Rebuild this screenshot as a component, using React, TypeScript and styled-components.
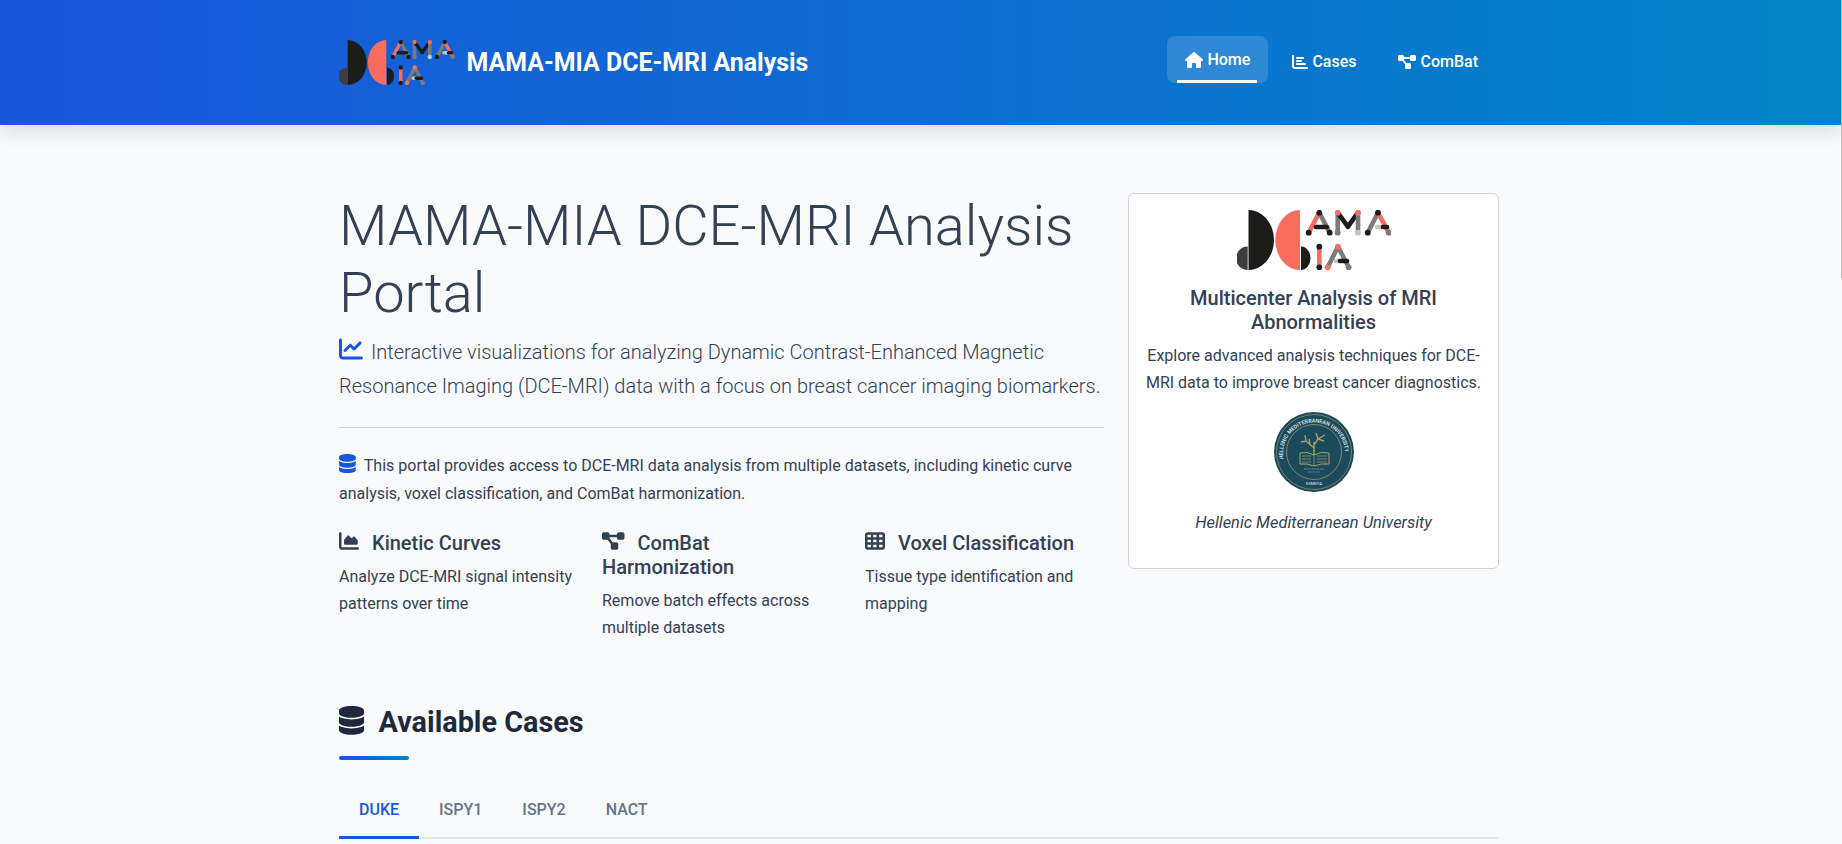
import React from "react";
import styled, { createGlobalStyle } from "styled-components";
import { FaHouse, FaChartBar, FaDiagramProject, FaChartLine, FaDatabase, FaChartArea, FaTableCells } from "react-icons/fa6";

const Global = createGlobalStyle`
  html, body { margin: 0; padding: 0; height: 844px; overflow: hidden; }
  body { font-family: Roboto, "Liberation Sans", sans-serif; font-size: 16px; line-height: 1.7; color: #334155; background: #f8fafc; }
  * { box-sizing: border-box; }
`;
const HouseIcon = styled(FaHouse)`
  && { width: 1.125em; height: 1em; }
`;
const DiagramIcon = styled(FaDiagramProject)`
  && { width: 1.125em; height: 1em; }
`;
const DbIcon = styled(FaDatabase)`
  && { width: .875em; height: 1em; }
`;
const Header = styled.header`
  height: 125px; background: linear-gradient(90deg, #1a56db, #0284c7);
  box-shadow: 0 4px 20px rgba(0,0,0,.15); position: relative; color: #fff;
`;
const Wrap = styled.div`
  width: 1160px; margin-left: 339px;
`;
const HeaderRow = styled(Wrap)`
  display: flex; align-items: center; justify-content: space-between; height: 100%;
`;
const Brand = styled.div`
  display: flex; align-items: center; gap: 12px; font-size: 24.9px; font-weight: 700; line-height: 1.2;
`;
const Nav = styled.nav`
  display: flex; gap: 6px; margin-right: 3px; margin-bottom: 2px;
`;
const NavItem = styled.a<{ $active?: boolean }>`
  position: relative; display: flex; align-items: center; gap: 4px; height: 47px; padding: 0 18px;
  font-size: 16px; font-weight: 500; color: #fff; border-radius: 8px;
  background: ${p => (p.$active ? "rgba(255,255,255,.15)" : "transparent")};
  svg { width: 1em; height: 1em; flex: none; }
  ${p => p.$active && `transform: translateY(-2px); &::after { content: ""; position: absolute; left: 10px; right: 11px; bottom: 0; height: 3px; background: #fff; }`}
`;
const Main = styled(Wrap)`
  padding-top: 68px;
`;
const Hero = styled.div`
  display: grid; grid-template-columns: 765px 371px; column-gap: 24px; align-items: start;
`;
const Title = styled.h1`
  margin: 0 0 8px; font-size: 56px; font-weight: 300; line-height: 1.2; color: #334155;
`;
const Lead = styled.p`
  margin: 0; font-size: 20px; font-weight: 300; line-height: 34px; color: #334155;
  svg { color: #1a56db; vertical-align: -2px; margin-right: 8px; width: 24px; height: 24px; }
`;
const Rule = styled.hr`
  margin: 24px 0; border: 0; border-top: 1px solid #cfd2d6;
`;
const Intro = styled.p`
  margin: 0 0 24px; color: #334155;
  svg { color: #1a56db; margin-right: 8px; font-size: 19.2px; vertical-align: -2px; }
`;
const Features = styled.div`
  display: grid; grid-template-columns: repeat(3, 263px); margin-right: -24px;
`;
const Feature = styled.div`
  padding-right: 24px;
`;
const FeatureTitle = styled.h3`
  margin: 0 0 8px; font-size: 20px; font-weight: 500; line-height: 1.2; color: #334155;
  svg { margin-right: 13px; font-size: 20px; width: 1em; height: 1em; vertical-align: -1px; }
`;
const FeatureText = styled.p`
  margin: 0; color: #334155;
`;
const Card = styled.aside`
  height: 376px; background: #fff; border: 1px solid #cfd2d6; border-radius: 6px; padding: 16px; text-align: center;
  display: flex; flex-direction: column; align-items: center;
`;
const CardTitle = styled.h4`
  margin: 16px 0 8px; font-size: 20px; font-weight: 500; line-height: 1.2; color: #334155;
`;
const CardText = styled.p`
  margin: 0 0 16px; color: #334155;
`;
const Uni = styled.p`
  margin: 17px 0 0; font-style: italic; font-size: 16.4px; color: #334155;
`;
const SectionTitle = styled.h2`
  margin: 64px 0 0; font-size: 28.8px; font-weight: 700; line-height: 1.2; color: #1e293b;
  svg { margin-right: 14.4px; font-size: 28.8px; vertical-align: -3px; }
`;
const Bar = styled.div`
  width: 70px; height: 4px; border-radius: 2px; margin-top: 16px; background: linear-gradient(90deg, #1a56db, #0284c7);
`;
const Tabs = styled.div`
  display: flex; margin-top: 20px; border-bottom: 2px solid #e2e8f0;
`;
const Tab = styled.div<{ $active?: boolean }>`
  padding: 16px 20px 13px; margin-bottom: -2px; font-size: 16px; font-weight: 500; line-height: 1.7;
  color: ${p => (p.$active ? "#1a56db" : "#64748b")};
  border-bottom: 3px solid ${p => (p.$active ? "#1a56db" : "transparent")};
`;
const ScrollThumb = styled.div`
  position: fixed; top: 0; right: 0; width: 1px; height: 278px; background: #bdbdbd;
`;
const Pic = styled.svg`
  display: block; flex: none;
`;

const Mark: React.FC<{ height: number }> = ({ height }) => {
  const dark = "#1c1c1a", red = "#f96c5e", grey = "#7a7a7a", light = "#c4c4c4";
  const seg = (x1: number, y1: number, x2: number, y2: number, c: string) => (
    <line x1={x1} y1={y1} x2={x2} y2={y2} stroke={c} strokeWidth="4.6" strokeLinecap="round" />
  );
  const dot = (x: number, y: number, c: string) => <circle cx={x} cy={y} r="2.9" fill={c} />;
  return (
    <Pic height={height} width={(height * 154) / 60} viewBox="0 0 154 60" aria-hidden>
      <path d="M10.7 36.6a11.7 11.7 0 0 0 0 23.4z" fill="#3d3d3b" />
      <path d="M11.5 0a25.5 30 0 0 1 0 60z" fill={dark} />
      <path d="M63 0v60a24.7 30 0 0 1 0-60z" fill={red} />
      <path d="M64 36.6a9.5 11.7 0 0 1 0 23.4z" fill={dark} />
      {seg(71.7, 22.7, 82.3, 2.7, red)}{seg(82.3, 2.7, 92.7, 22.7, grey)}{seg(79, 17, 90, 17, dark)}
      {dot(71.7, 22.7, dark)}{dot(82.3, 2.7, dark)}{dot(92.7, 22.7, dark)}
      {seg(100.7, 22.7, 100.7, 2.7, grey)}{seg(100.7, 2.7, 110.9, 16.7, dark)}{seg(110.9, 16.7, 121, 2.7, dark)}{seg(121, 2.7, 121, 22.7, grey)}
      {dot(100.7, 2.7, red)}{dot(100.7, 22.7, grey)}{dot(121, 2.7, red)}{dot(121, 22.7, light)}
      {seg(130.7, 22.7, 141, 2.7, grey)}{seg(141, 2.7, 151.7, 22.7, red)}{seg(140, 17, 146, 17, light)}{seg(146, 17, 150, 17, dark)}
      {dot(130.7, 22.7, dark)}{dot(141, 2.7, dark)}{dot(151.7, 22.7, grey)}
      {seg(82.3, 36.7, 82.3, 57.3, red)}{dot(82.3, 36.7, dark)}{dot(82.3, 57.3, dark)}
      {seg(90.7, 57.3, 101, 36.7, grey)}{seg(101, 36.7, 111.7, 57.3, grey)}{seg(99, 51, 103, 51, light)}{seg(103, 51, 110, 51, dark)}
      {dot(90.7, 57.3, red)}{dot(101, 36.7, red)}{dot(111.7, 57.3, grey)}
    </Pic>
  );
};

const Seal = () => (
  <Pic width="80" height="80" viewBox="0 0 80 80" aria-hidden>
    <circle cx="40" cy="40" r="40" fill="#1a4a5c" />
    <circle cx="40" cy="40" r="37.5" fill="none" stroke="#a09a68" strokeWidth=".7" />
    <circle cx="40" cy="40" r="27.5" fill="none" stroke="#a09a68" strokeWidth=".8" />
    <defs><path id="sealArc" d="M9.5 47A31 31 0 1 1 70.5 47" /></defs>
    <text fontSize="5.4" fill="#e6edf0" fontFamily="Roboto" fontWeight="500"><textPath href="#sealArc" startOffset="0">HELLENIC MEDITERRANEAN UNIVERSITY</textPath></text>
    <g stroke="#a8a066" fill="none">
      <path d="M40 43V30M40 36l-8-7M40 33l4-6l7-4M32 29l-5 1M32 29l-1-6M44 27l-2-6M44 27l6 2M36 32l-1-5" strokeWidth="1.4" />
      <path d="M26 41q7-2 14 2q7-4 15-2v11q-8-1-15 2q-7-3-14-2z" strokeWidth="1" />
      <path d="M40 43v11M28 44h9M28 47h9M28 50h9M43 44h10M43 47h10M43 50h10" strokeWidth=".7" />
    </g>
    <path d="M30 57h20M34 60h12" stroke="#8fa0a0" strokeWidth=".7" strokeDasharray="2 .6" />
    <text x="40" y="73" fontSize="4" fill="#e6edf0" textAnchor="middle" fontFamily="Roboto">ΕΛΜΕΠΑ</text>
  </Pic>
);

export default function App() {
  return (
    <>
      <Global />
      <Header>
        <HeaderRow>
          <Brand><Mark height={45} /><span>MAMA-MIA DCE-MRI Analysis</span></Brand>
          <Nav>
            <NavItem $active><HouseIcon />Home</NavItem>
            <NavItem><FaChartBar />Cases</NavItem>
            <NavItem><DiagramIcon />ComBat</NavItem>
          </Nav>
        </HeaderRow>
      </Header>
      <ScrollThumb />
      <Main>
        <Hero>
          <div>
            <Title>MAMA-MIA DCE-MRI Analysis Portal</Title>
            <Lead><FaChartLine />Interactive visualizations for analyzing Dynamic Contrast-Enhanced Magnetic Resonance Imaging (DCE-MRI) data with a focus on breast cancer imaging biomarkers.</Lead>
            <Rule />
            <Intro><DbIcon />This portal provides access to DCE-MRI data analysis from multiple datasets, including kinetic curve analysis, voxel classification, and ComBat harmonization.</Intro>
            <Features>
              <Feature><FeatureTitle><FaChartArea />Kinetic Curves</FeatureTitle><FeatureText>Analyze DCE-MRI signal intensity patterns over time</FeatureText></Feature>
              <Feature><FeatureTitle><DiagramIcon />ComBat Harmonization</FeatureTitle><FeatureText>Remove batch effects across multiple datasets</FeatureText></Feature>
              <Feature><FeatureTitle><FaTableCells />Voxel Classification</FeatureTitle><FeatureText>Tissue type identification and mapping</FeatureText></Feature>
            </Features>
          </div>
          <Card>
            <Mark height={60} />
            <CardTitle>Multicenter Analysis of MRI Abnormalities</CardTitle>
            <CardText>Explore advanced analysis techniques for DCE-MRI data to improve breast cancer diagnostics.</CardText>
            <Seal />
            <Uni>Hellenic Mediterranean University</Uni>
          </Card>
        </Hero>
        <SectionTitle><DbIcon />Available Cases</SectionTitle>
        <Bar />
        <Tabs>
          <Tab $active>DUKE</Tab><Tab>ISPY1</Tab><Tab>ISPY2</Tab><Tab>NACT</Tab>
        </Tabs>
      </Main>
    </>
  );
}
